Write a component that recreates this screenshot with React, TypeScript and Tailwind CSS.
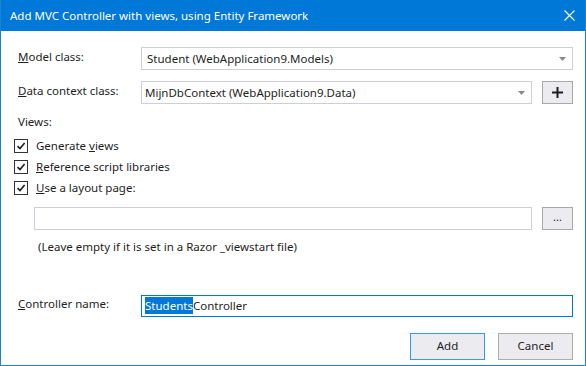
import React from 'react';

const font = { fontFamily: '"Noto Sans", "Open Sans", sans-serif' };

const Check: React.FC<{ children: React.ReactNode }> = ({ children }) => (
  <div className="flex items-center h-[14px] gap-[8px]">
    <div className="w-[14px] h-[14px] border border-[#333333] bg-white flex items-center justify-center">
      <svg width="10" height="10" viewBox="0 0 10 10">
        <path d="M1.5 5.2 L4 7.6 L8.6 2" fill="none" stroke="#1e1e1e" strokeWidth="1.6" />
      </svg>
    </div>
    <span className="text-[11.5px] text-[#1e1e1e] leading-none">{children}</span>
  </div>
);

const Arrow = () => (
  <svg width="7" height="4" viewBox="0 0 7 4" className="mr-[6px]">
    <path d="M0 0 H7 L3.5 4 Z" fill="#8a8a8a" />
  </svg>
);

export default function App() {
  return (
    <div
      className="w-[586px] h-[366px] flex flex-col border-l border-r border-b border-[#1883d7] bg-white overflow-hidden"
      style={font}
    >
      <div className="h-[31px] bg-[#0078d7] text-white flex items-center justify-between pl-[9px] pr-[10px] shrink-0">
        <span className="text-[11.5px]">Add MVC Controller with views, using Entity Framework</span>
        <svg width="11" height="11" viewBox="0 0 11 11">
          <path d="M0.5 0.5 L10.5 10.5 M10.5 0.5 L0.5 10.5" stroke="white" strokeWidth="1.1" />
        </svg>
      </div>

      <div className="flex flex-col pl-[17px] pr-[12px] text-[11.5px] text-[#1e1e1e]">
        <div className="flex items-center mt-[16px] h-[23px]">
          <span className="w-[123px] pb-[4px]">
            <span className="underline">M</span>odel class:
          </span>
          <div className="flex-1 h-[23px] border border-[#cccedb] flex items-center justify-between pl-[5px]">
            <span>Student (WebApplication9.Models)</span>
            <Arrow />
          </div>
        </div>

        <div className="flex items-center mt-[11px] h-[23px]">
          <span className="w-[123px] pb-[4px]">
            <span className="underline">D</span>ata context class:
          </span>
          <div className="flex-1 h-[23px] border border-[#cccedb] flex items-center justify-between pl-[3px]">
            <span>MijnDbContext (WebApplication9.Data)</span>
            <Arrow />
          </div>
          <button className="ml-[10px] w-[31px] h-[23px] border border-[#a9a9a9] bg-[#ececf0] flex items-center justify-center">
            <svg width="11" height="11" viewBox="0 0 11 11">
              <path d="M5.5 0 V11 M0 5.5 H11" stroke="#1e1e1e" strokeWidth="2" />
            </svg>
          </button>
        </div>

        <div className="mt-[12px] h-[14px] leading-none">Views:</div>

        <div className="flex flex-col gap-[7px] mt-[9px] -ml-[4px]">
          <Check>
            Generate <span className="underline">v</span>iews
          </Check>
          <Check>
            <span className="underline">R</span>eference script libraries
          </Check>
          <Check>
            <span className="underline">U</span>se a layout page:
          </Check>
        </div>

        <div className="flex items-center mt-[12px] pl-[16px]">
          <div className="flex-1 h-[23px] border border-[#cccedb]" />
          <button className="ml-[10px] w-[31px] h-[23px] border border-[#a9a9a9] bg-[#ececf0] flex items-center justify-center text-[11px] leading-none pb-[4px]">
            ...
          </button>
        </div>

        <div className="mt-[11px] pl-[20px] leading-none">
          (Leave empty if it is set in a Razor _viewstart file)
        </div>

        <div className="flex items-center mt-[42px] h-[22px]">
          <span className="w-[123px] pb-[4px]">
            <span className="underline">C</span>ontroller name:
          </span>
          <div className="flex-1 h-[22px] border border-[#0078d7] flex items-center pl-[3px]">
            <span className="bg-[#0078d7] text-white">Students</span>
            <span>Controller</span>
          </div>
        </div>

        <div className="flex justify-end gap-[13px] mt-[16px]">
          <button className="w-[75px] h-[27px] border border-[#3399ff] bg-[#ececf0] text-[11.5px]">Add</button>
          <button className="w-[75px] h-[27px] border border-[#adadad] bg-[#ececf0] text-[11.5px]">Cancel</button>
        </div>
      </div>
    </div>
  );
}
